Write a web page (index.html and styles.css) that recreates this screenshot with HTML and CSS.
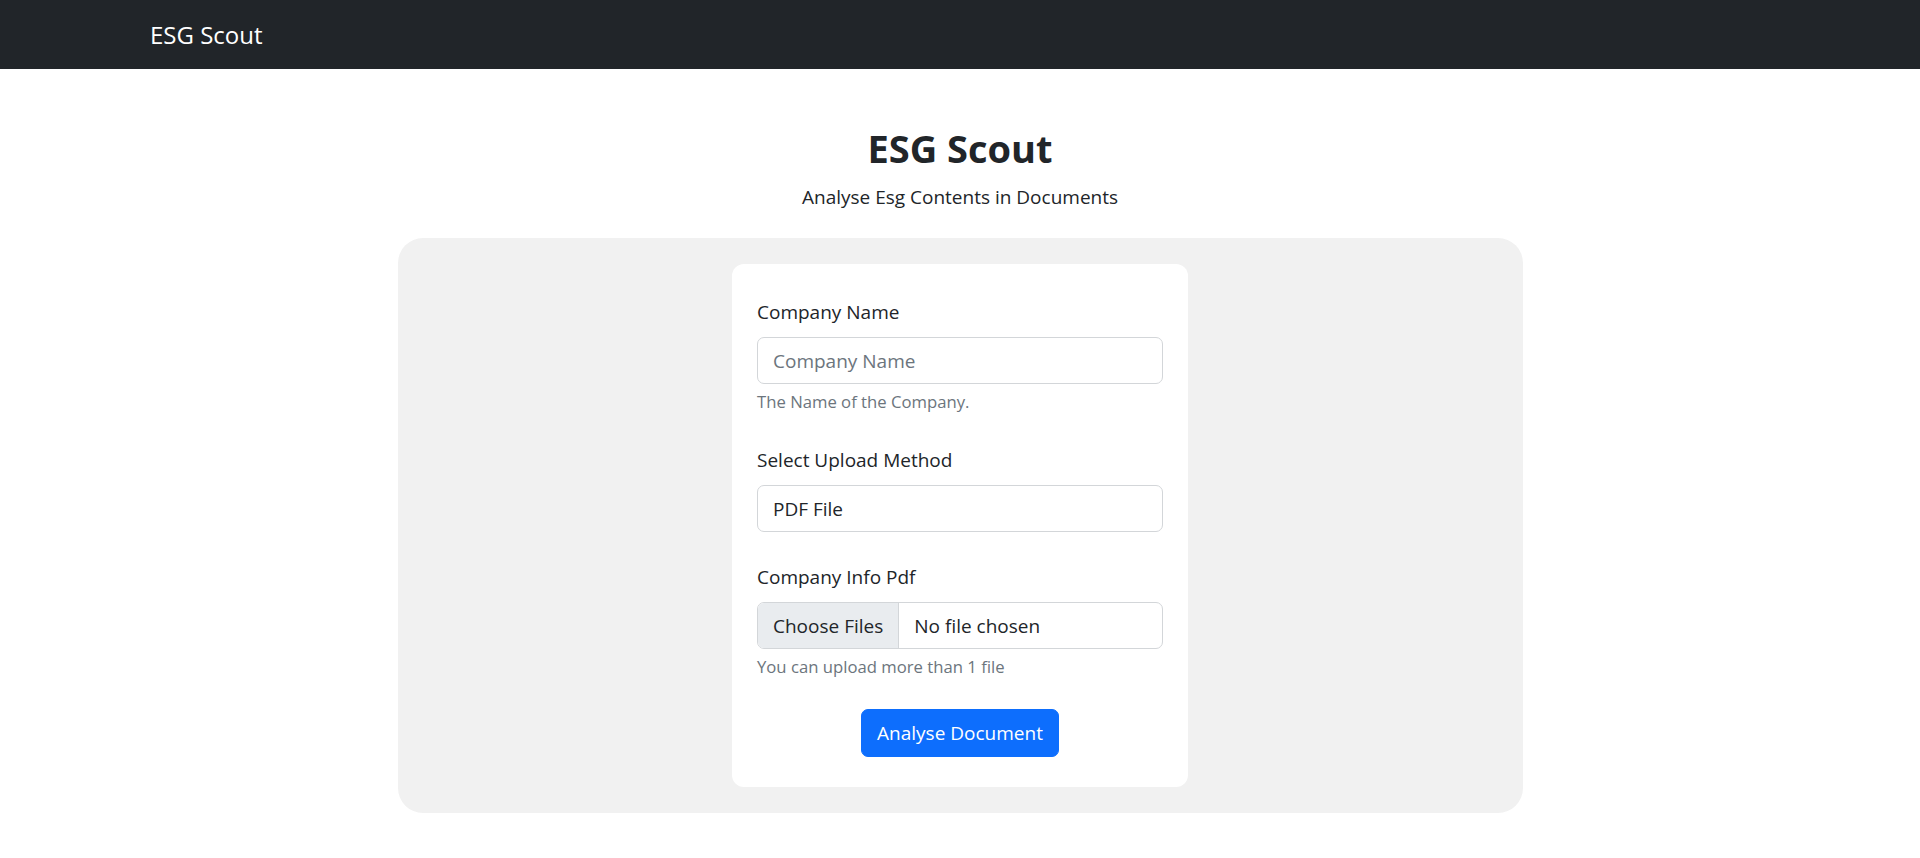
FILE: index.html
```html
<!DOCTYPE html>
<html lang="en">
<head>
<meta charset="utf-8">
<title>ESG Scout</title>
<link rel="stylesheet" href="styles.css">
</head>
<body>
<nav class="navbar">
  <div class="nav-container">
    <a class="brand" href="#">ESG Scout</a>
  </div>
</nav>
<main class="main">
  <header class="hero">
    <h1 class="title">ESG Scout</h1>
    <p class="subtitle">Analyse Esg Contents in Documents</p>
  </header>
  <section class="panel">
    <form class="card">
      <div class="group">
        <label class="label" for="company">Company Name</label>
        <div class="control"><span class="placeholder">Company Name</span></div>
        <div class="help">The Name of the Company.</div>
      </div>
      <div class="group">
        <label class="label">Select Upload Method</label>
        <div class="control">PDF File</div>
      </div>
      <div class="group">
        <label class="label">Company Info Pdf</label>
        <div class="control file">
          <span class="file-btn">Choose Files</span>
          <span class="file-name">No file chosen</span>
        </div>
        <div class="help">You can upload more than 1 file</div>
      </div>
      <div class="actions">
        <button type="button" class="btn">Analyse Document</button>
      </div>
    </form>
  </section>
</main>
</body>
</html>
```

FILE: styles.css
```css
html, body {
  margin: 0;
  padding: 0;
}
body {
  font-family: "Open Sans", "Noto Sans", sans-serif;
  font-size: 19px;
  line-height: 30px;
  color: #212529;
  background: #fff;
}
.navbar {
  background: #212529;
  height: 69px;
  display: flex;
  align-items: center;
}
.nav-container {
  width: 1650px;
  margin: 0 auto;
  padding: 0 15px;
  box-sizing: border-box;
}
.brand {
  color: #fff;
  text-decoration: none;
  font-size: 24px;
  line-height: 1.5;
}
.main {
  display: flex;
  flex-direction: column;
  align-items: center;
}
.hero {
  text-align: center;
  padding-top: 55px;
}
.title {
  margin: 0;
  font-size: 38px;
  font-weight: 700;
  line-height: 48px;
}
.subtitle {
  margin: 10px 0 0;
  font-size: 19px;
}
.panel {
  margin-top: 26px;
  width: 1125px;
  background: #f1f1f1;
  border-radius: 25px;
  padding: 26px 0;
  display: flex;
  justify-content: center;
}
.card {
  width: 456px;
  box-sizing: border-box;
  background: #fff;
  border-radius: 12px;
  padding: 33px 25px 30px;
  display: flex;
  flex-direction: column;
  gap: 30px;
}
.group {
  display: flex;
  flex-direction: column;
}
.label {
  margin-bottom: 10px;
}
.control {
  height: 47px;
  box-sizing: border-box;
  border: 1px solid #d3d6d9;
  border-radius: 7px;
  padding: 0 15px;
  display: flex;
  align-items: center;
}
.placeholder {
  color: #6c757d;
}
.control.file {
  padding: 0;
  overflow: hidden;
}
.file-btn {
  background: #e9ecef;
  height: 100%;
  display: flex;
  align-items: center;
  padding: 0 15px;
  border-right: 1px solid #d3d6d9;
}
.file-name {
  padding-left: 15px;
}
.help {
  margin-top: 5px;
  font-size: 16.7px;
  line-height: 26px;
  color: #6c757d;
}
.actions {
  display: flex;
  justify-content: center;
  margin-top: -1px;
}
.btn {
  font-family: inherit;
  font-size: 19px;
  line-height: 30px;
  color: #fff;
  background: #0d6efd;
  border: 1px solid #0d6efd;
  border-radius: 7px;
  padding: 8px 15px;
  cursor: pointer;
}
```
